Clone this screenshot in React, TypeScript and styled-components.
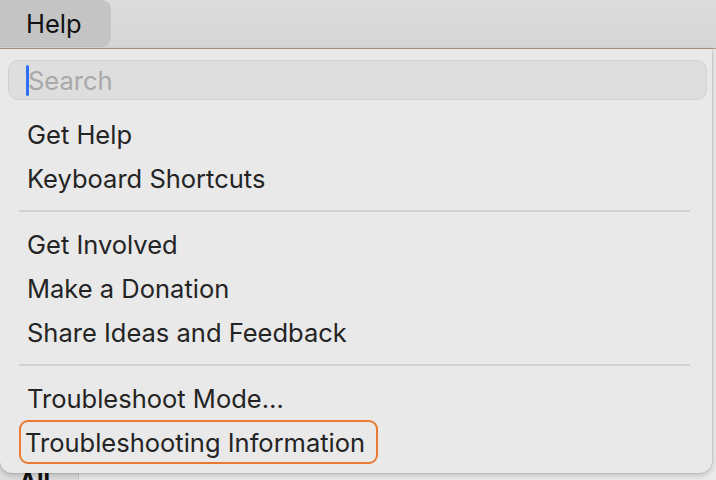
import React from "react";
import styled, { createGlobalStyle } from "styled-components";

const GlobalStyle = createGlobalStyle`
  html, body {
    margin: 0;
    padding: 0;
    width: 716px;
    height: 480px;
    overflow: hidden;
    font-family: Inter, "Noto Sans", "Liberation Sans", sans-serif;
  }
`;

const Screen = styled.div`
  position: relative;
  width: 716px;
  height: 480px;
  display: flex;
  flex-direction: column;
  background: #ececec;
`;

const MenuBar = styled.div`
  height: 48px;
  display: flex;
  align-items: stretch;
  background: linear-gradient(#dcdcdc, #d6d6d6);
  border-bottom: 1px solid #b39c90;
`;

const MenuTitle = styled.div<{ $open?: boolean }>`
  width: 111px;
  height: 47px;
  display: flex;
  align-items: center;
  padding-left: 26px;
  box-sizing: border-box;
  font-size: 25.5px;
  color: #111;
  border-radius: 0 9px 9px 0;
  background: ${(p) => (p.$open ? "#c4c4c4" : "transparent")};
`;

const WindowArea = styled.div`
  flex: 1;
  display: flex;
  align-items: flex-end;
`;

const Sidebar = styled.div`
  width: 79px;
  height: 100%;
  background: #dedede;
  border-right: 1px solid #c8c8c8;
  display: flex;
  align-items: flex-end;
  padding-left: 19px;
  box-sizing: border-box;
`;

const SideTab = styled.span`
  font-size: 24px;
  font-weight: 700;
  color: #111;
  line-height: 20px;
  transform: translateY(12px);
`;

const Dropdown = styled.div`
  position: absolute;
  top: 49px;
  left: 0;
  width: 712px;
  height: 424px;
  box-sizing: border-box;
  background: #e9e9e9;
  border-radius: 0 0 12px 12px;
  box-shadow: 0 2px 6px rgba(0, 0, 0, 0.22), 0 0 0 0.5px rgba(0, 0, 0, 0.12);
  padding: 11px 5px 0 8px;
  display: flex;
  flex-direction: column;
`;

const SearchField = styled.div`
  height: 40px;
  box-sizing: border-box;
  border: 1px solid #d2d2d2;
  background: #dedede;
  border-radius: 10px;
  display: flex;
  align-items: center;
  padding-left: 17px;
  margin-bottom: 12px;
`;

const Caret = styled.span`
  width: 3px;
  height: 31px;
  border-radius: 1.5px;
  background: #2f6ff5;
`;

const Placeholder = styled.span`
  font-size: 25.5px;
  color: #a9a9a9;
  margin-left: -1px;
`;

const Item = styled.div<{ $focused?: boolean }>`
  height: 44px;
  display: flex;
  align-items: center;
  align-self: ${(p) => (p.$focused ? "flex-start" : "stretch")};
  margin: 0 11px;
  padding: ${(p) => (p.$focused ? "0 11px 0 4px" : "0 0 0 6px")};
  font-size: 25.5px;
  color: #242424;
  border-radius: 9px;
  box-sizing: border-box;
  border: 2px solid ${(p) => (p.$focused ? "#ea7a32" : "transparent")};
`;

const Separator = styled.div`
  height: 2px;
  background: #d1d1d1;
  margin: 10px 17px 10px 11px;
`;

const groups = [
  ["Get Help", "Keyboard Shortcuts"],
  ["Get Involved", "Make a Donation", "Share Ideas and Feedback"],
  ["Troubleshoot Mode…", "Troubleshooting Information"],
];

const App: React.FC = () => {
  return (
    <Screen>
      <GlobalStyle />
      <MenuBar>
        <MenuTitle $open>Help</MenuTitle>
      </MenuBar>
      <WindowArea>
        <Sidebar>
          <SideTab>All</SideTab>
        </Sidebar>
      </WindowArea>
      <Dropdown>
        <SearchField>
          <Caret />
          <Placeholder>Search</Placeholder>
        </SearchField>
        {groups.map((group, gi) => (
          <React.Fragment key={gi}>
            {gi > 0 && <Separator />}
            {group.map((label) => (
              <Item key={label} $focused={label === "Troubleshooting Information"}>
                {label}
              </Item>
            ))}
          </React.Fragment>
        ))}
      </Dropdown>
    </Screen>
  );
};

export default App;
